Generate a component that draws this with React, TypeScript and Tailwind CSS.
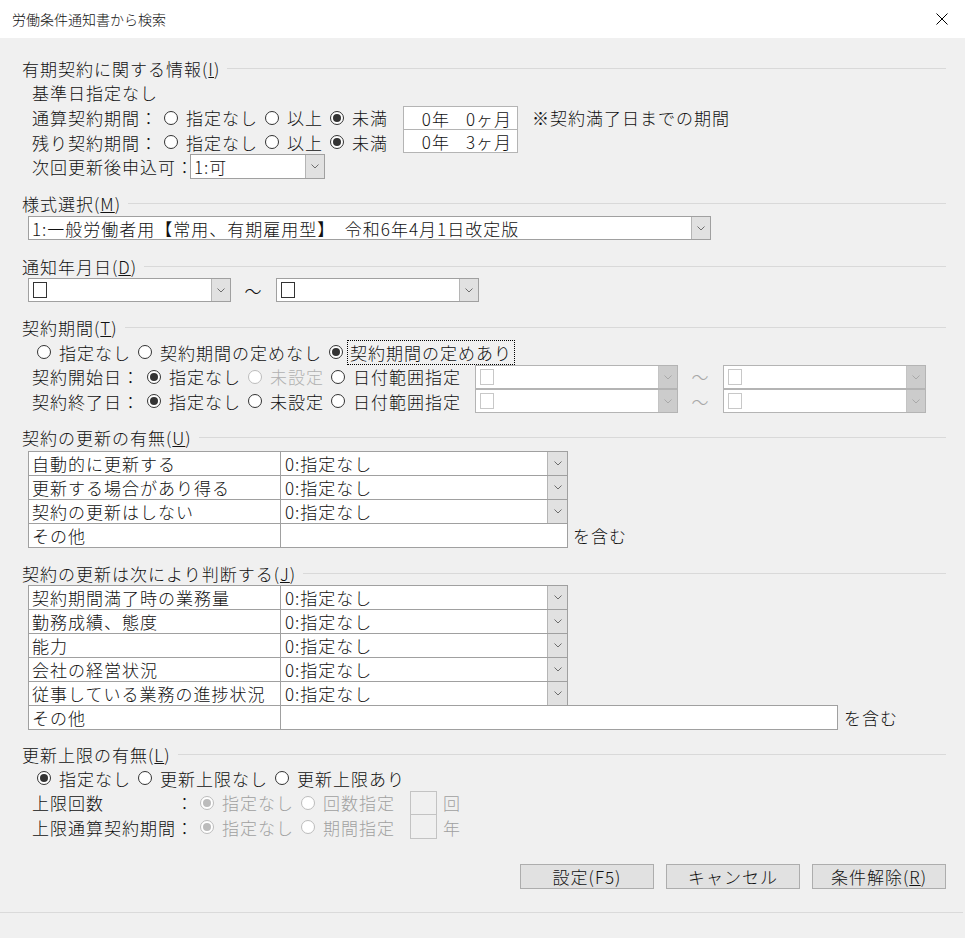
import React from "react";

const FONT = "font-['Noto_Sans_CJK_JP',sans-serif]";

function Chevron({ disabled }: { disabled?: boolean }) {
  return (
    <svg width="8" height="5" viewBox="0 0 8 5" className="block">
      <path
        d="M0.5 0.5 L4 4 L7.5 0.5"
        fill="none"
        stroke={disabled ? "#a9a9a9" : "#6d6d6d"}
        strokeWidth="1"
      />
    </svg>
  );
}

function Combo({
  className,
  children,
  disabled,
}: {
  className: string;
  children?: React.ReactNode;
  disabled?: boolean;
}) {
  return (
    <div
      className={`flex border bg-white ${
        disabled ? "border-[#b4b4b4]" : "border-[#a0a0a0]"
      } ${className}`}
    >
      <div className="flex-1 flex items-center pl-[3px] overflow-hidden whitespace-nowrap">
        {children}
      </div>
      <div
        className={`w-[19px] flex items-center justify-center border-l ${
          disabled ? "bg-[#cccccc] border-[#c4c4c4]" : "bg-[#e1e1e1] border-[#b5b5b5]"
        }`}
      >
        <Chevron disabled={disabled} />
      </div>
    </div>
  );
}

function CheckSquare({ disabled }: { disabled?: boolean }) {
  return (
    <span
      className={`block w-[14px] h-[16px] border bg-white ml-[1px] ${
        disabled ? "border-[#c8c8c8]" : "border-[#333333]"
      }`}
    />
  );
}

function Radio({ checked, disabled }: { checked?: boolean; disabled?: boolean }) {
  return (
    <span
      className={`w-[14px] h-[14px] rounded-full border bg-white flex items-center justify-center shrink-0 ${
        disabled ? "border-[#bcbcbc]" : "border-[#333333]"
      }`}
    >
      {checked && (
        <span
          className={`block w-[8px] h-[8px] rounded-full ${
            disabled ? "bg-[#bcbcbc]" : "bg-[#333333]"
          }`}
        />
      )}
    </span>
  );
}

function RItem({
  label,
  checked,
  disabled,
  dim,
}: {
  label: string;
  checked?: boolean;
  disabled?: boolean;
  dim?: boolean;
}) {
  return (
    <span className="flex items-center gap-[8px]">
      <Radio checked={checked} disabled={disabled} />
      <span className={disabled ? (dim ? "text-[#b0b0b0]" : "text-[#a0a0a0]") : ""}>
        {label}
      </span>
    </span>
  );
}

function Header({ children }: { children: React.ReactNode }) {
  return (
    <div className="h-[24px] flex items-center">
      <span className="whitespace-nowrap">{children}</span>
      <div className="flex-1 h-px bg-[#d9d9d9] ml-[7px]" />
    </div>
  );
}

function TRow({
  label,
  value,
  first,
  wide,
}: {
  label: string;
  value?: string;
  first?: boolean;
  wide?: boolean;
}) {
  return (
    <div className={`flex h-[25px] ${first ? "" : "-mt-px"}`}>
      <div className="w-[253px] border border-[#a0a0a0] bg-white flex items-center pl-[3px] whitespace-nowrap">
        {label}
      </div>
      {value !== undefined ? (
        <div className="-ml-px w-[288px] border border-[#a0a0a0] bg-white flex">
          <div className="flex-1 flex items-center pl-[4px] whitespace-nowrap">{value}</div>
          <div className="w-[20px] flex items-center justify-center border-l border-[#b5b5b5] bg-[#e1e1e1]">
            <Chevron />
          </div>
        </div>
      ) : (
        <>
          <div
            className={`-ml-px border border-[#a0a0a0] bg-white ${
              wide ? "w-[558px]" : "w-[288px]"
            }`}
          />
          <span className={`self-center ${wide ? "ml-[6px]" : "ml-[5px]"}`}>を含む</span>
        </>
      )}
    </div>
  );
}

function Button({ children }: { children: React.ReactNode }) {
  return (
    <div className="w-[134px] h-[25px] bg-[#e1e1e1] border border-[#adadad] flex items-center justify-center">
      {children}
    </div>
  );
}

export default function App() {
  return (
    <div
      className={`w-[965px] h-[938px] bg-[#f0f0f0] text-[#111111] ${FONT} font-light text-[17px] tracking-[1px] leading-none flex flex-col overflow-hidden`}
    >
      {/* Title bar */}
      <div className="h-[38px] bg-white flex items-center justify-between pl-[12px] pr-[17px] shrink-0">
        <span className="text-[14px] tracking-normal">労働条件通知書から検索</span>
        <svg width="12" height="12" viewBox="0 0 12 12" className="block">
          <path d="M0.5 0.5 L11.5 11.5 M11.5 0.5 L0.5 11.5" stroke="#000" strokeWidth="1" />
        </svg>
      </div>

      <div className="flex flex-col pl-[22px] pr-[19px]">
        {/* Section 1 */}
        <div className="mt-[18px]">
          <Header>
            有期契約に関する情報(<span className="underline">I</span>)
          </Header>
        </div>
        <div className="h-[25px] flex items-center pl-[10px]">基準日指定なし</div>
        <div className="h-[25px] flex items-center pl-[10px]">
          <span className="w-[132px] whitespace-nowrap">通算契約期間：</span>
          <div className="w-[239px] flex items-center gap-[7px]">
            <RItem label="指定なし" />
            <RItem label="以上" />
            <RItem label="未満" checked />
          </div>
          <div className="self-end h-[24px] w-[115px] bg-white border border-[#b4b4b4] flex items-center justify-end pr-[5px]">
            <span>0年</span>
            <span className="ml-[16px]">0ヶ月</span>
          </div>
          <span className="ml-[14px]">※契約満了日までの期間</span>
        </div>
        <div className="h-[24px] flex items-center pl-[10px]">
          <span className="w-[132px] whitespace-nowrap">残り契約期間：</span>
          <div className="w-[239px] flex items-center gap-[7px]">
            <RItem label="指定なし" />
            <RItem label="以上" />
            <RItem label="未満" checked />
          </div>
          <div className="self-start h-[23px] w-[115px] bg-white border border-t-0 border-[#b4b4b4] flex items-center justify-end pr-[5px]">
            <span>0年</span>
            <span className="ml-[16px]">3ヶ月</span>
          </div>
        </div>
        <div className="h-[25px] flex items-center pl-[10px]">
          <span className="w-[158px] whitespace-nowrap">次回更新後申込可：</span>
          <Combo className="w-[135px] h-[25px]">1:可</Combo>
        </div>

        {/* Section 2 */}
        <div className="mt-[12px]">
          <Header>
            様式選択(<span className="underline">M</span>)
          </Header>
        </div>
        <div className="mt-[1px] pl-[6px]">
          <Combo className="w-[683px] h-[24px]">
            1:一般労働者用【常用、有期雇用型】　令和6年4月1日改定版
          </Combo>
        </div>

        {/* Section 3 */}
        <div className="mt-[14px]">
          <Header>
            通知年月日(<span className="underline">D</span>)
          </Header>
        </div>
        <div className="h-[24px] flex items-center pl-[6px]">
          <Combo className="w-[203px] h-[24px]">
            <CheckSquare />
          </Combo>
          <span className="w-[45px] text-center">～</span>
          <Combo className="w-[203px] h-[24px]">
            <CheckSquare />
          </Combo>
        </div>

        {/* Section 4 */}
        <div className="mt-[13px]">
          <Header>
            契約期間(<span className="underline">T</span>)
          </Header>
        </div>
        <div className="mt-[1px] h-[24px] flex items-center pl-[15px] gap-[7px]">
          <RItem label="指定なし" />
          <RItem label="契約期間の定めなし" />
          <span className="flex items-center gap-[4px]">
            <Radio checked />
            <span className="border border-dotted border-black px-[2px] py-[3px]">
              契約期間の定めあり
            </span>
          </span>
        </div>
        <div className="h-[25px] flex items-center pl-[10px]">
          <span className="w-[115px] whitespace-nowrap">契約開始日：</span>
          <div className="w-[328px] flex items-center gap-[7px]">
            <RItem label="指定なし" checked />
            <RItem label="未設定" disabled dim />
            <RItem label="日付範囲指定" />
          </div>
          <Combo className="self-end w-[203px] h-[24px]" disabled>
            <CheckSquare disabled />
          </Combo>
          <span className="w-[45px] text-center text-[#a8a8a8]">～</span>
          <Combo className="self-end w-[203px] h-[24px]" disabled>
            <CheckSquare disabled />
          </Combo>
        </div>
        <div className="h-[24px] flex items-center pl-[10px]">
          <span className="w-[115px] whitespace-nowrap">契約終了日：</span>
          <div className="w-[328px] flex items-center gap-[7px]">
            <RItem label="指定なし" checked />
            <RItem label="未設定" />
            <RItem label="日付範囲指定" />
          </div>
          <Combo className="self-start w-[203px] h-[24px]" disabled>
            <CheckSquare disabled />
          </Combo>
          <span className="w-[45px] text-center text-[#a8a8a8]">～</span>
          <Combo className="self-start w-[203px] h-[24px]" disabled>
            <CheckSquare disabled />
          </Combo>
        </div>

        {/* Section 5 */}
        <div className="mt-[12px]">
          <Header>
            契約の更新の有無(<span className="underline">U</span>)
          </Header>
        </div>
        <div className="mt-[2px] pl-[6px] flex flex-col">
          <TRow first label="自動的に更新する" value="0:指定なし" />
          <TRow label="更新する場合があり得る" value="0:指定なし" />
          <TRow label="契約の更新はしない" value="0:指定なし" />
          <TRow label="その他" />
        </div>

        {/* Section 6 */}
        <div className="mt-[13px]">
          <Header>
            契約の更新は次により判断する(<span className="underline">J</span>)
          </Header>
        </div>
        <div className="pl-[6px] flex flex-col">
          <TRow first label="契約期間満了時の業務量" value="0:指定なし" />
          <TRow label="勤務成績、態度" value="0:指定なし" />
          <TRow label="能力" value="0:指定なし" />
          <TRow label="会社の経営状況" value="0:指定なし" />
          <TRow label="従事している業務の進捗状況" value="0:指定なし" />
          <TRow label="その他" wide />
        </div>

        {/* Section 7 */}
        <div className="mt-[12px]">
          <Header>
            更新上限の有無(<span className="underline">L</span>)
          </Header>
        </div>
        <div className="h-[24px] flex items-center pl-[15px] gap-[7px]">
          <RItem label="指定なし" checked />
          <RItem label="更新上限なし" />
          <RItem label="更新上限あり" />
        </div>
        <div className="h-[25px] flex items-center pl-[10px]">
          <span className="w-[144px] whitespace-nowrap">上限回数</span>
          <span className="w-[24px]">：</span>
          <div className="w-[210px] flex items-center gap-[7px]">
            <RItem label="指定なし" checked disabled />
            <RItem label="回数指定" disabled />
          </div>
          <div className="self-end h-[24px] w-[27px] border border-[#c3c3c3]" />
          <span className="ml-[6px] text-[#a0a0a0]">回</span>
        </div>
        <div className="h-[24px] flex items-center pl-[10px]">
          <span className="w-[168px] whitespace-nowrap">上限通算契約期間：</span>
          <div className="w-[210px] flex items-center gap-[7px]">
            <RItem label="指定なし" checked disabled />
            <RItem label="期間指定" disabled />
          </div>
          <div className="self-start h-[24px] w-[27px] border border-t-0 border-[#c3c3c3]" />
          <span className="ml-[6px] text-[#a0a0a0]">年</span>
        </div>

        {/* Buttons */}
        <div className="mt-[25px] flex justify-end gap-[12px]">
          <Button>設定(F5)</Button>
          <Button>キャンセル</Button>
          <Button>
            条件解除(<span className="underline">R</span>)
          </Button>
        </div>
      </div>

      <div className="mt-[23px] h-px bg-[#dadada] w-[963px]" />
    </div>
  );
}
